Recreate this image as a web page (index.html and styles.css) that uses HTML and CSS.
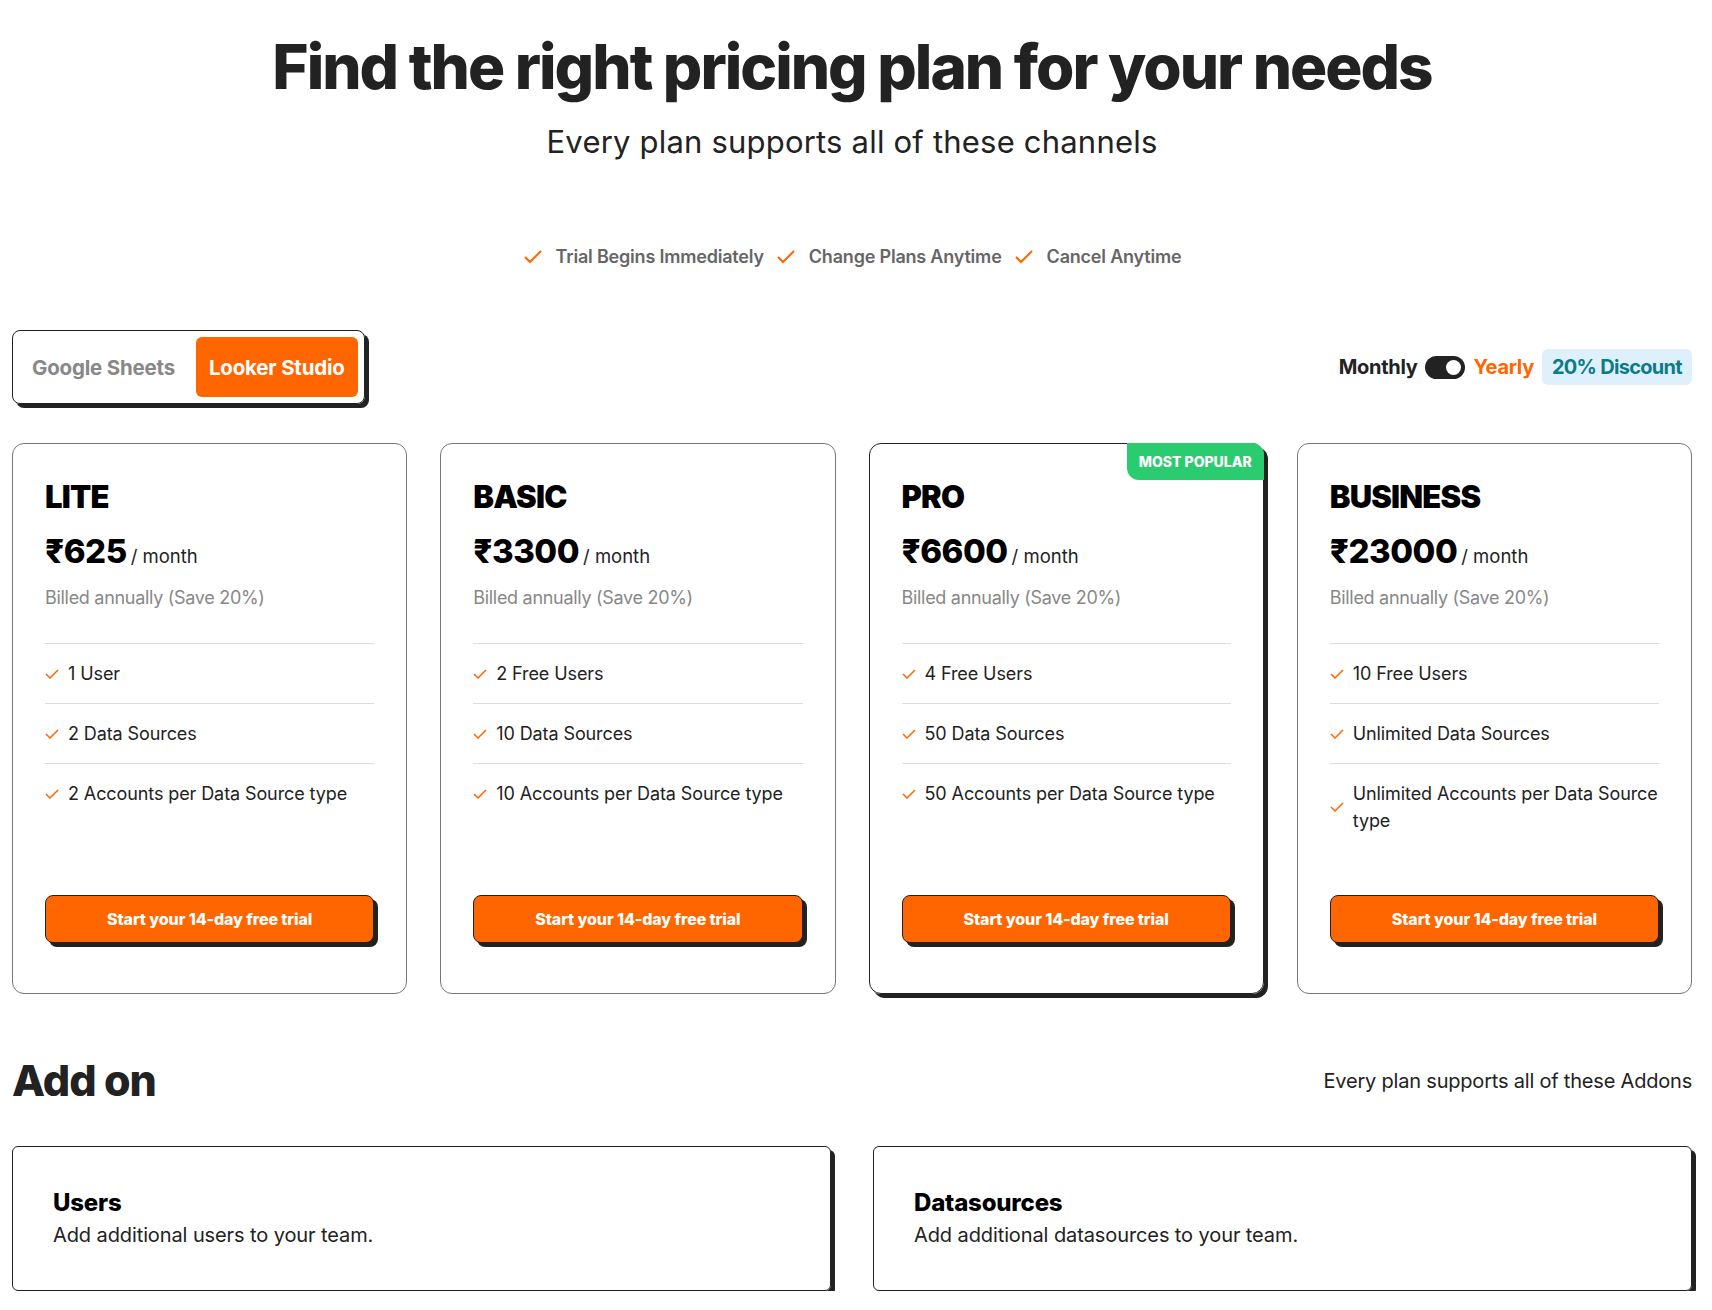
FILE: index.html
```html
<!DOCTYPE html>
<html lang="en">
<head>
  <meta charset="UTF-8">
  <meta name="viewport" content="width=device-width, initial-scale=1.0">
  <title>Pricing</title>
  <link rel="stylesheet" href="styles.css">
</head>
<body>
  <main class="page">
    <header class="hero">
      <h1>Find the right pricing plan for your needs</h1>
      <p class="hero-sub">Every plan supports all of these channels</p>
      <ul class="perks">
        <li><svg class="perk-check" viewBox="0 0 20 16"><polyline points="2,8 7,13 18,2"/></svg>Trial Begins Immediately</li>
        <li><svg class="perk-check" viewBox="0 0 20 16"><polyline points="2,8 7,13 18,2"/></svg>Change Plans Anytime</li>
        <li><svg class="perk-check" viewBox="0 0 20 16"><polyline points="2,8 7,13 18,2"/></svg>Cancel Anytime</li>
      </ul>
    </header>

    <div class="toolbar">
      <div class="tabs">
        <button class="tab">Google Sheets</button>
        <button class="tab active">Looker Studio</button>
      </div>
      <div class="billing">
        <span class="monthly">Monthly</span>
        <span class="switch"><span class="knob"></span></span>
        <span class="yearly">Yearly</span>
        <span class="discount">20% Discount</span>
      </div>
    </div>

    <section class="plans">
      <div class="plan">
        <h3 class="plan-name">LITE</h3>
        <div class="price"><span class="amount">&#8377;625</span><span class="per">/ month</span></div>
        <p class="billed">Billed annually (Save 20%)</p>
        <ul class="features">
          <li><svg class="tick" viewBox="0 0 14 10"><polyline points="1,5 5,9 13,1"/></svg><span>1 User</span></li>
          <li><svg class="tick" viewBox="0 0 14 10"><polyline points="1,5 5,9 13,1"/></svg><span>2 Data Sources</span></li>
          <li><svg class="tick" viewBox="0 0 14 10"><polyline points="1,5 5,9 13,1"/></svg><span>2 Accounts per Data Source type</span></li>
        </ul>
        <button class="trial">Start your 14-day free trial</button>
      </div>

      <div class="plan">
        <h3 class="plan-name">BASIC</h3>
        <div class="price"><span class="amount">&#8377;3300</span><span class="per">/ month</span></div>
        <p class="billed">Billed annually (Save 20%)</p>
        <ul class="features">
          <li><svg class="tick" viewBox="0 0 14 10"><polyline points="1,5 5,9 13,1"/></svg><span>2 Free Users</span></li>
          <li><svg class="tick" viewBox="0 0 14 10"><polyline points="1,5 5,9 13,1"/></svg><span>10 Data Sources</span></li>
          <li><svg class="tick" viewBox="0 0 14 10"><polyline points="1,5 5,9 13,1"/></svg><span>10 Accounts per Data Source type</span></li>
        </ul>
        <button class="trial">Start your 14-day free trial</button>
      </div>

      <div class="plan popular">
        <span class="badge">MOST POPULAR</span>
        <h3 class="plan-name">PRO</h3>
        <div class="price"><span class="amount">&#8377;6600</span><span class="per">/ month</span></div>
        <p class="billed">Billed annually (Save 20%)</p>
        <ul class="features">
          <li><svg class="tick" viewBox="0 0 14 10"><polyline points="1,5 5,9 13,1"/></svg><span>4 Free Users</span></li>
          <li><svg class="tick" viewBox="0 0 14 10"><polyline points="1,5 5,9 13,1"/></svg><span>50 Data Sources</span></li>
          <li><svg class="tick" viewBox="0 0 14 10"><polyline points="1,5 5,9 13,1"/></svg><span>50 Accounts per Data Source type</span></li>
        </ul>
        <button class="trial">Start your 14-day free trial</button>
      </div>

      <div class="plan">
        <h3 class="plan-name">BUSINESS</h3>
        <div class="price"><span class="amount">&#8377;23000</span><span class="per">/ month</span></div>
        <p class="billed">Billed annually (Save 20%)</p>
        <ul class="features">
          <li><svg class="tick" viewBox="0 0 14 10"><polyline points="1,5 5,9 13,1"/></svg><span>10 Free Users</span></li>
          <li><svg class="tick" viewBox="0 0 14 10"><polyline points="1,5 5,9 13,1"/></svg><span>Unlimited Data Sources</span></li>
          <li><svg class="tick" viewBox="0 0 14 10"><polyline points="1,5 5,9 13,1"/></svg><span>Unlimited Accounts per Data Source type</span></li>
        </ul>
        <button class="trial">Start your 14-day free trial</button>
      </div>
    </section>

    <section class="addons">
      <div class="addons-head">
        <h2>Add on</h2>
        <p>Every plan supports all of these Addons</p>
      </div>
      <div class="addon-grid">
        <div class="addon">
          <h4>Users</h4>
          <p>Add additional users to your team.</p>
        </div>
        <div class="addon">
          <h4>Datasources</h4>
          <p>Add additional datasources to your team.</p>
        </div>
      </div>
    </section>
  </main>
</body>
</html>
```

FILE: styles.css
```css
body {
  margin: 0;
  background: #fff;
  color: #222;
  font-family: Inter, "Noto Sans", "DejaVu Sans", sans-serif;
}
h1, h2, h3, h4, p, ul {
  margin: 0;
  padding: 0;
}
ul {
  list-style: none;
}
button {
  font-family: inherit;
  cursor: pointer;
}
.page {
  width: 1680px;
  margin-left: 12px;
}

/* header */
.hero {
  text-align: center;
}
.hero h1 {
  margin-top: 29px;
  font-size: 62px;
  line-height: 76px;
  font-weight: 800;
  letter-spacing: -2px;
  color: #222;
}
.hero-sub {
  margin-top: 17px;
  font-size: 31px;
  line-height: 40px;
  letter-spacing: 0.2px;
  color: #222;
}
.perks {
  margin-top: 81px;
  display: flex;
  justify-content: center;
  gap: 12px;
}
.perks li {
  display: flex;
  align-items: center;
  gap: 13px;
  font-size: 18px;
  line-height: 28px;
  font-weight: 600;
  letter-spacing: -0.2px;
  color: #666;
}
.perk-check {
  width: 20px;
  height: 16px;
  fill: none;
  stroke: #ff6600;
  stroke-width: 2;
}

/* tabs + billing switch */
.toolbar {
  margin-top: 59px;
  display: flex;
  justify-content: space-between;
  align-items: center;
}
.tabs {
  display: flex;
  gap: 8px;
  padding: 6px;
  border: 1px solid #222;
  border-radius: 8px;
  box-shadow: 4px 4px 0 #222;
}
.tab {
  height: 60px;
  padding: 0 13px;
  border: none;
  border-radius: 6px;
  background: none;
  font-size: 20.5px;
  font-weight: 700;
  letter-spacing: -0.2px;
  color: #888;
}
.tab.active {
  background: #ff6600;
  color: #fff;
}
.billing {
  display: flex;
  align-items: center;
  gap: 8px;
  font-size: 20px;
  font-weight: 700;
  letter-spacing: -0.3px;
}
.monthly {
  color: #222;
}
.switch {
  position: relative;
  width: 40px;
  height: 23px;
  border-radius: 12px;
  background: #222;
}
.knob {
  position: absolute;
  top: 4px;
  right: 4px;
  width: 15px;
  height: 15px;
  border-radius: 50%;
  background: #fff;
}
.yearly {
  color: #ff6600;
}
.discount {
  padding: 0 10px;
  line-height: 36px;
  border-radius: 6px;
  background: #dff0fd;
  color: #0b7c86;
  letter-spacing: -0.7px;
}

/* plan cards */
.plans {
  margin-top: 39px;
  display: grid;
  grid-template-columns: repeat(4, 1fr);
  gap: 33px;
}
.plan {
  position: relative;
  display: flex;
  flex-direction: column;
  padding: 34px 32px 50px;
  border: 1px solid #777;
  border-radius: 12px;
}
.plan.popular {
  border-color: #222;
  box-shadow: 4px 4px 0 #222;
}
.badge {
  position: absolute;
  top: -1px;
  right: -1px;
  padding: 0 12px;
  line-height: 37px;
  border-radius: 0 12px 0 12px;
  background: #2bcb70;
  color: #fff;
  font-size: 14px;
  font-weight: 800;
  letter-spacing: 0;
}
.plan-name {
  font-size: 31px;
  line-height: 38px;
  font-weight: 900;
  color: #000;
  letter-spacing: -0.8px;
}
.price {
  margin-top: 15px;
  display: flex;
  align-items: baseline;
  gap: 4px;
  line-height: 40px;
}
.amount {
  font-size: 33px;
  font-weight: 800;
  color: #000;
  letter-spacing: -0.5px;
}
.per {
  font-size: 18.5px;
  color: #222;
}
.billed {
  margin-top: 8px;
  font-size: 18px;
  line-height: 27px;
  letter-spacing: -0.3px;
  color: #888;
}
.features {
  margin-top: 32px;
  margin-bottom: 45px;
}
.features li {
  display: flex;
  align-items: center;
  gap: 9px;
  padding: 16px 0;
  border-top: 1px solid #ddd;
  font-size: 18px;
  line-height: 27px;
  letter-spacing: -0.1px;
  color: #222;
}
.tick {
  flex: none;
  width: 14px;
  height: 10px;
  fill: none;
  stroke: #ff6600;
  stroke-width: 1.5;
}
.trial {
  margin-top: auto;
  height: 48px;
  border: 1px solid #222;
  border-radius: 8px;
  background: #ff6600;
  box-shadow: 4px 4px 0 #222;
  color: #fff;
  font-size: 16px;
  font-weight: 800;
  letter-spacing: -0.1px;
}

/* add ons */
.addons-head {
  margin-top: 60px;
  display: flex;
  justify-content: space-between;
  align-items: center;
}
.addons-head h2 {
  font-size: 43px;
  line-height: 53px;
  font-weight: 800;
  letter-spacing: -1px;
  color: #222;
}
.addons-head p {
  font-size: 20px;
  letter-spacing: -0.2px;
  color: #222;
}
.addon-grid {
  margin-top: 39px;
  display: grid;
  grid-template-columns: 1fr 1fr;
  gap: 42px;
}
.addon {
  height: 145px;
  box-sizing: border-box;
  padding: 0 40px;
  display: flex;
  flex-direction: column;
  justify-content: center;
  border: 1px solid #222;
  border-radius: 6px;
  box-shadow: 4px 4px 0 #222;
}
.addon h4 {
  font-size: 24px;
  line-height: 32px;
  font-weight: 800;
  letter-spacing: -0.2px;
  color: #000;
}
.addon p {
  margin-top: 1px;
  font-size: 20px;
  line-height: 30px;
  letter-spacing: -0.1px;
  color: #222;
}
```
